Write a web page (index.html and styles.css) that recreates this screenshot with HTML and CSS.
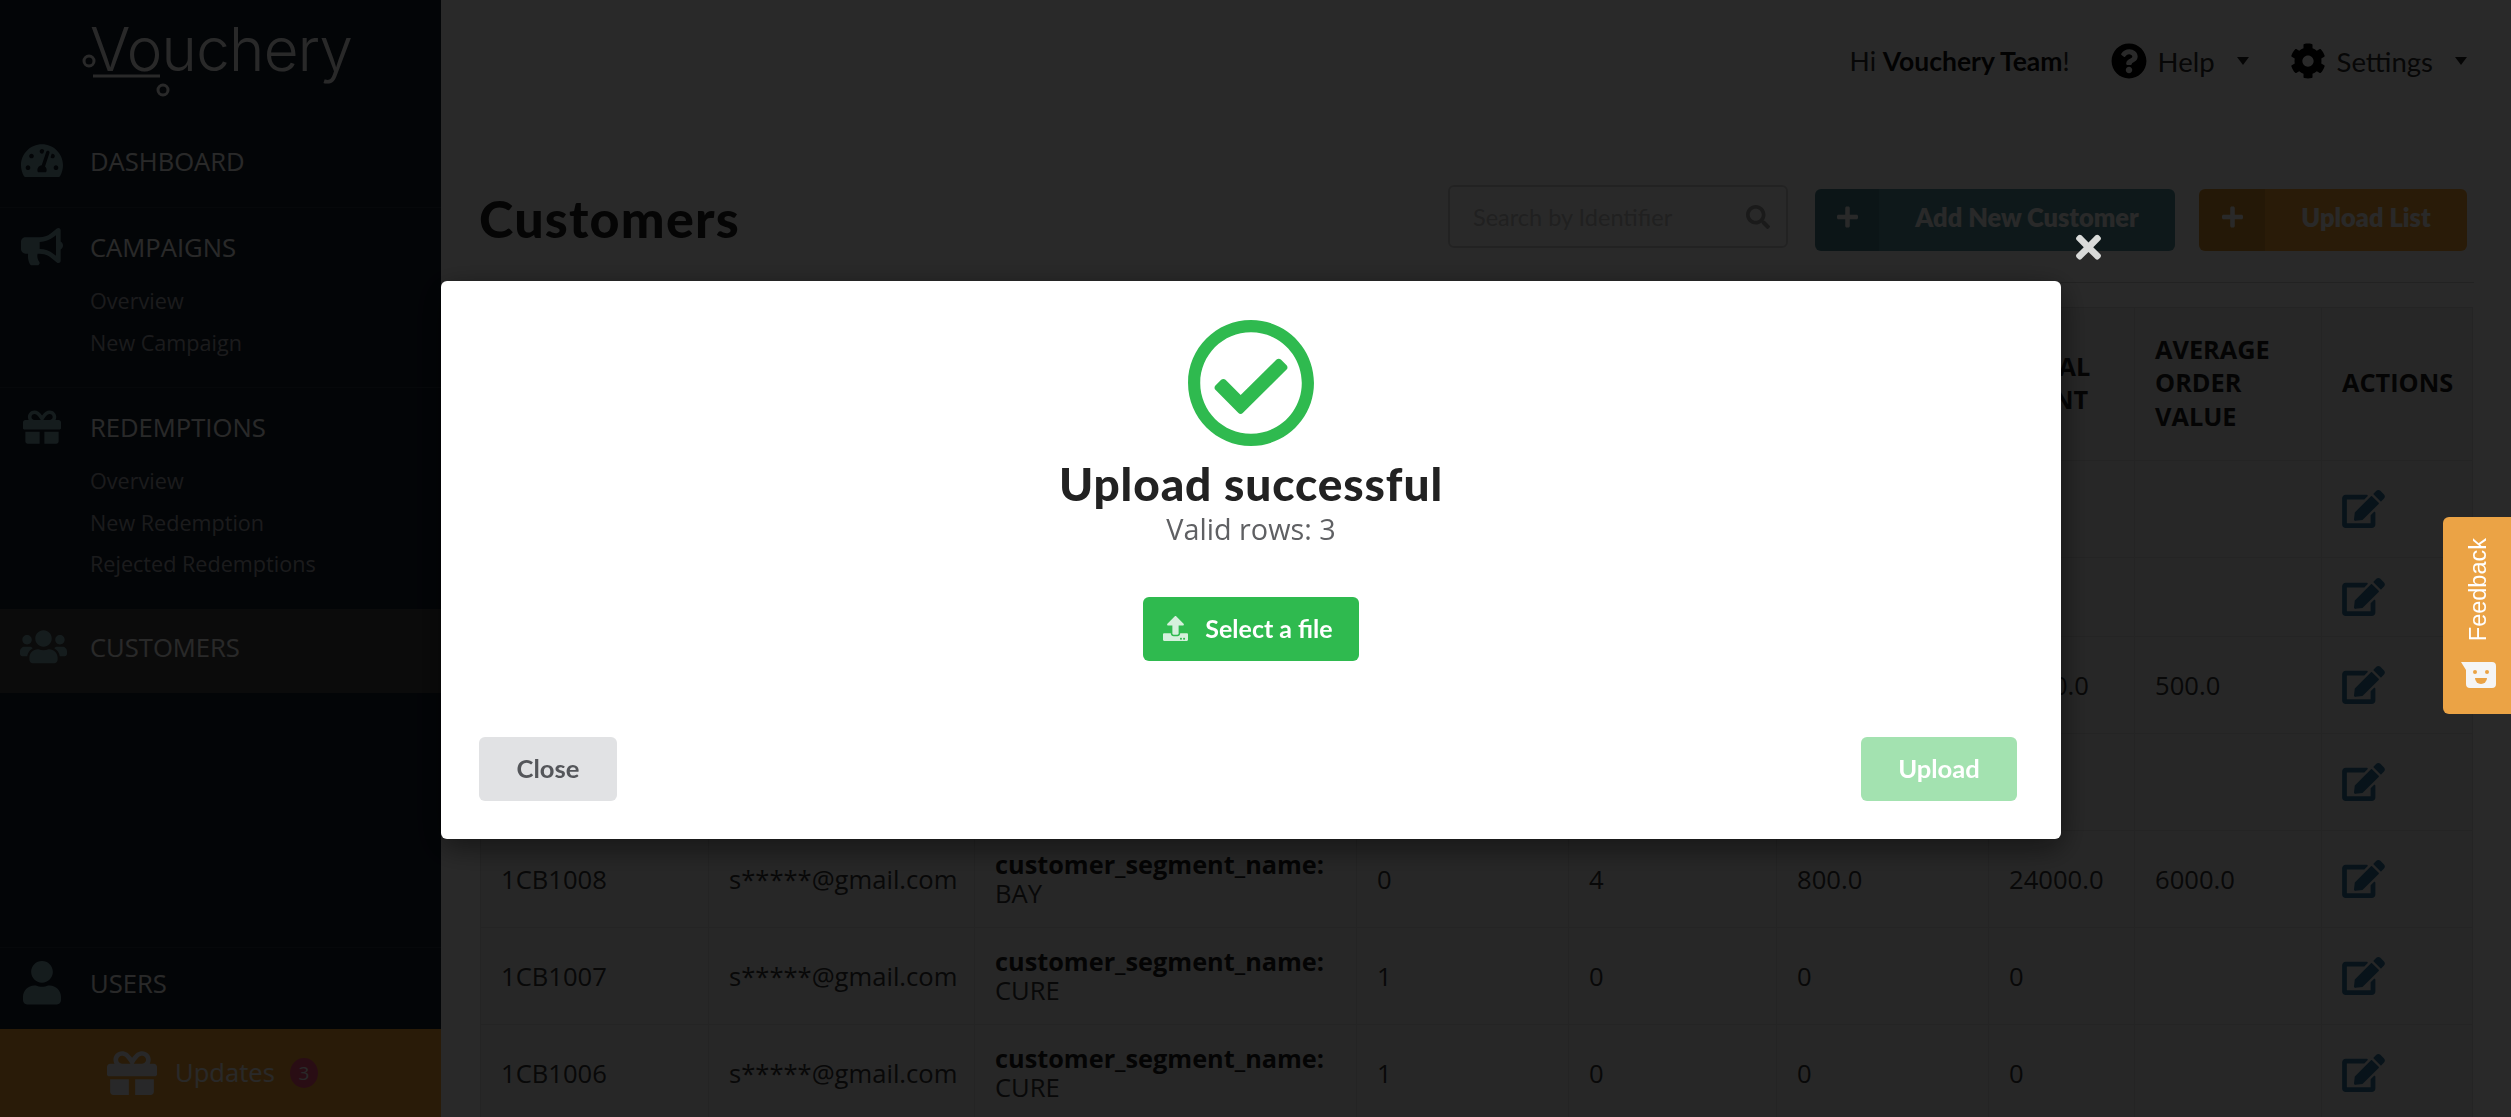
FILE: index.html
```html
<!DOCTYPE html>
<html lang="en">
<head>
    <meta charset="UTF-8">
    <meta name="viewport" content="width=device-width, initial-scale=1.0">
    <title>Customers</title>
    <link rel="stylesheet" href="styles.css">
</head>
<body>
    <div class="layout">
        <!-- Sidebar -->
        <aside class="sidebar">
            <div class="logo">
                <span class="logo-text">Vouchery</span>
                <svg class="logo-cart" viewBox="0 0 90 50"><circle cx="9" cy="11" r="5" fill="none" stroke="currentColor" stroke-width="3"/><path d="M13 26h67" stroke="currentColor" stroke-width="3"/><circle cx="83" cy="40" r="5" fill="none" stroke="currentColor" stroke-width="3"/></svg>
            </div>

            <div class="nav-section nav-dashboard">
                <a class="nav-title">
                    <span class="nav-icon"><svg width="42" viewBox="0 0 576 512"><path d="M288 32C128.94 32 0 160.94 0 320c0 52.800 14.250 102.260 39.060 144.800 5.610 9.620 16.300 15.200 27.440 15.200h443c11.140 0 21.830-5.580 27.440-15.200C561.750 422.260 576 372.800 576 320c0-159.060-128.940-288-288-288zm0 64c14.710 0 26.580 10.130 30.320 23.650-1.110 2.260-2.640 4.230-3.450 6.670l-9.220 27.670c-5.130 3.490-10.970 6.010-17.640 6.010-17.670 0-32-14.330-32-32S270.330 96 288 96zM96 384c-17.670 0-32-14.330-32-32s14.330-32 32-32 32 14.330 32 32-14.330 32-32 32zm48-160c-17.670 0-32-14.330-32-32s14.330-32 32-32 32 14.330 32 32-14.330 32-32 32zm246.770-72.410l-61.330 184C343.130 347.330 352 364.540 352 384c0 11.720-3.380 22.550-8.880 32H232.880c-5.500-9.450-8.880-20.280-8.880-32 0-33.940 26.500-61.430 59.900-63.590l61.340-184.010c4.170-12.560 17.730-19.450 30.360-15.170 12.570 4.190 19.350 17.770 15.170 30.360zm14.660 57.200l15.520-46.550c3.470-1.290 7.130-2.230 11.050-2.230 17.670 0 32 14.330 32 32s-14.330 32-32 32c-11.380-.01-20.890-6.280-26.570-15.220zM480 384c-17.670 0-32-14.330-32-32s14.330-32 32-32 32 14.330 32 32-14.330 32-32 32z"/></svg></span>
                    DASHBOARD
                </a>
            </div>

            <div class="nav-section">
                <a class="nav-title">
                    <span class="nav-icon"><svg width="42" viewBox="0 0 576 512"><path d="M576 240c0-23.630-12.950-44.040-32-55.120V32.010C544 23.260 537.020 0 512 0c-7.120 0-14.190 2.380-19.980 7.020l-85.030 68.030C364.280 109.190 310.660 128 256 128H64c-35.350 0-64 28.650-64 64v96c0 35.350 28.650 64 64 64h33.700c-1.390 10.480-2.180 21.140-2.180 32 0 39.770 9.260 77.350 25.560 110.940 5.190 10.690 16.520 17.060 28.400 17.060h74.280c26.050 0 41.690-29.840 25.900-50.560-16.400-21.520-26.150-48.360-26.150-77.440 0-11.110 1.620-21.790 4.410-32H256c54.660 0 108.280 18.810 150.980 52.950l85.030 68.030a32.023 32.023 0 0 0 19.980 7.020c24.920 0 32-22.780 32-32V295.130C563.050 284.040 576 263.630 576 240zm-96 141.420l-33.050-26.440C392.950 311.780 325.120 288 256 288v-96c69.120 0 136.950-23.780 190.950-66.980L480 98.580v282.840z"/></svg></span>
                    CAMPAIGNS
                </a>
                <a class="nav-sub">Overview</a>
                <a class="nav-sub">New Campaign</a>
            </div>

            <div class="nav-section nav-redemptions">
                <a class="nav-title">
                    <span class="nav-icon nav-icon-narrow"><svg width="38" viewBox="0 0 512 512"><path d="M32 448c0 17.700 14.300 32 32 32h160V320H32v128zm256 32h160c17.700 0 32-14.300 32-32V320H288v160zm192-320h-42.100c6.200-12.100 10.100-25.500 10.100-40 0-48.500-39.500-88-88-88-41.600 0-68.500 21.300-103 68.300-34.500-47-61.400-68.300-103-68.300-48.500 0-88 39.500-88 88 0 14.500 3.800 27.900 10.100 40H32c-17.700 0-32 14.300-32 32v80c0 8.800 7.200 16 16 16h480c8.800 0 16-7.200 16-16v-80c0-17.700-14.300-32-32-32zm-326.100 0c-22.100 0-40-17.900-40-40s17.900-40 40-40c19.900 0 34.600 3.300 86.100 80h-86.100zm206.100 0h-86.100c51.400-76.500 65.700-80 86.100-80 22.100 0 40 17.900 40 40s-17.900 40-40 40z"/></svg></span>
                    REDEMPTIONS
                </a>
                <a class="nav-sub">Overview</a>
                <a class="nav-sub">New Redemption</a>
                <a class="nav-sub">Rejected Redemptions</a>
            </div>

            <div class="nav-section nav-active">
                <a class="nav-title">
                    <span class="nav-icon nav-icon-wide"><svg width="47" viewBox="0 0 640 512"><path d="M96 224c35.300 0 64-28.700 64-64s-28.700-64-64-64-64 28.700-64 64 28.700 64 64 64zm448 0c35.300 0 64-28.700 64-64s-28.700-64-64-64-64 28.700-64 64 28.700 64 64 64zm32 32h-64c-17.600 0-33.500 7.100-45.100 18.600 40.300 22.100 68.900 62 75.100 109.400h66c17.700 0 32-14.300 32-32v-32c0-35.300-28.700-64-64-64zm-256 0c61.900 0 112-50.100 112-112S381.900 32 320 32 208 82.100 208 144s50.100 112 112 112zm76.800 32h-8.300c-20.800 10-43.900 16-68.500 16s-47.600-6-68.500-16h-8.300C179.600 288 128 339.600 128 403.200V432c0 26.500 21.500 48 48 48h288c26.500 0 48-21.500 48-48v-28.800c0-63.600-51.600-115.200-115.200-115.200zm-223.700-13.400C161.500 263.100 145.600 256 128 256H64c-35.300 0-64 28.700-64 64v32c0 17.700 14.300 32 32 32h65.900c6.300-47.400 34.900-87.300 75.200-109.400z"/></svg></span>
                    CUSTOMERS
                </a>
            </div>

            <div class="nav-section nav-users">
                <a class="nav-title">
                    <span class="nav-icon nav-icon-narrow"><svg width="38" viewBox="0 0 448 512"><path d="M224 256c70.700 0 128-57.300 128-128S294.700 0 224 0 96 57.300 96 128s57.300 128 128 128zm89.600 32h-16.700c-22.200 10.200-46.900 16-72.900 16s-50.600-5.800-72.900-16h-16.700C60.200 288 0 348.200 0 422.400V464c0 26.500 21.500 48 48 48h352c26.500 0 48-21.500 48-48v-41.600c0-74.200-60.200-134.400-134.400-134.400z"/></svg></span>
                    USERS
                </a>
            </div>

            <div class="updates">
                <svg width="50" viewBox="0 0 512 512"><path d="M32 448c0 17.700 14.300 32 32 32h160V320H32v128zm256 32h160c17.700 0 32-14.300 32-32V320H288v160zm192-320h-42.100c6.200-12.100 10.100-25.500 10.100-40 0-48.500-39.500-88-88-88-41.600 0-68.500 21.300-103 68.300-34.500-47-61.400-68.300-103-68.300-48.500 0-88 39.500-88 88 0 14.500 3.800 27.900 10.100 40H32c-17.700 0-32 14.300-32 32v80c0 8.800 7.200 16 16 16h480c8.800 0 16-7.200 16-16v-80c0-17.700-14.300-32-32-32zm-326.100 0c-22.100 0-40-17.900-40-40s17.900-40 40-40c19.900 0 34.600 3.300 86.100 80h-86.100zm206.100 0h-86.100c51.400-76.500 65.700-80 86.100-80 22.100 0 40 17.900 40 40s-17.900 40-40 40z"/></svg>
                <span class="updates-text">Updates</span>
                <span class="updates-badge">3</span>
            </div>
        </aside>

        <!-- Main content -->
        <main class="main">
            <div class="topbar">
                <span class="greeting">Hi <b>Vouchery Team</b>!</span>
                <span class="top-item help">
                    <svg width="36" viewBox="0 0 512 512"><path d="M504 256c0 136.997-111.043 248-248 248S8 392.997 8 256C8 119.083 119.043 8 256 8s248 111.083 248 248zM262.655 90c-54.497 0-89.255 22.957-116.549 63.758-3.536 5.286-2.353 12.415 2.715 16.258l34.699 26.310c5.205 3.947 12.621 3.008 16.665-2.122 17.864-22.658 30.113-35.797 57.303-35.797 20.429 0 45.698 13.148 45.698 32.958 0 14.976-12.363 22.667-32.534 33.976C247.128 238.528 216 254.941 216 296v4c0 6.627 5.373 12 12 12h56c6.627 0 12-5.373 12-12v-1.333c0-28.462 83.186-29.647 83.186-106.667 0-58.002-60.165-102-116.531-102zM256 338c-25.365 0-46 20.635-46 46 0 25.364 20.635 46 46 46s46-20.636 46-46c0-25.365-20.635-46-46-46z"/></svg>
                    Help
                    <i class="caret"></i>
                </span>
                <span class="top-item">
                    <svg width="36" viewBox="0 0 512 512"><path d="M487.4 315.700l-42.600-24.600c4.300-23.200 4.300-47 0-70.200l42.600-24.600c4.900-2.800 7.100-8.600 5.500-14-11.100-35.600-30-67.800-54.700-94.600-3.800-4.100-10-5.100-14.800-2.300L380.800 110c-17.900-15.400-38.500-27.300-60.800-35.100V25.800c0-5.600-3.900-10.500-9.400-11.700-36.700-8.200-74.300-7.800-109.200 0-5.500 1.200-9.400 6.100-9.400 11.700V75c-22.200 7.900-42.800 19.800-60.800 35.100L88.700 85.500c-4.900-2.800-11-1.900-14.800 2.300-24.700 26.700-43.600 58.900-54.700 94.600-1.700 5.400.600 11.200 5.500 14L67.300 221c-4.300 23.200-4.300 47 0 70.200l-42.600 24.600c-4.900 2.800-7.100 8.600-5.500 14 11.100 35.600 30 67.800 54.700 94.600 3.800 4.100 10 5.100 14.800 2.300l42.600-24.600c17.900 15.400 38.500 27.300 60.800 35.100v49.200c0 5.600 3.900 10.500 9.400 11.700 36.700 8.200 74.300 7.800 109.200 0 5.500-1.200 9.400-6.100 9.400-11.700v-49.200c22.200-7.900 42.800-19.800 60.800-35.100l42.600 24.600c4.900 2.800 11 1.900 14.800-2.300 24.700-26.700 43.600-58.900 54.700-94.600 1.500-5.500-.7-11.300-5.600-14.100zM256 336c-44.100 0-80-35.900-80-80s35.900-80 80-80 80 35.900 80 80-35.900 80-80 80z"/></svg>
                    Settings
                    <i class="caret"></i>
                </span>
            </div>

            <div class="page-head">
                <h1>Customers</h1>
                <div class="page-actions">
                    <div class="search">
                        <input type="text" placeholder="Search by Identifier">
                        <svg width="24" viewBox="0 0 512 512"><path d="M505 442.700L405.300 343c-4.500-4.500-10.600-7-17-7H372c27.600-35.300 44-79.700 44-128C416 93.100 322.900 0 208 0S0 93.100 0 208s93.100 208 208 208c48.300 0 92.700-16.400 128-44v16.300c0 6.400 2.500 12.500 7 17l99.700 99.700c9.400 9.400 24.600 9.400 33.900 0l28.300-28.300c9.400-9.400 9.400-24.600.1-34zM208 336c-70.700 0-128-57.200-128-128 0-70.700 57.200-128 128-128 70.700 0 128 57.200 128 128 0 70.700-57.200 128-128 128z"/></svg>
                    </div>
                    <a class="action-btn btn-add">
                        <span class="btn-icon"><svg width="21" viewBox="0 0 448 512"><path d="M416 208H272V64c0-17.670-14.330-32-32-32h-32c-17.670 0-32 14.330-32 32v144H32c-17.670 0-32 14.330-32 32v32c0 17.670 14.330 32 32 32h144v144c0 17.670 14.330 32 32 32h32c17.670 0 32-14.330 32-32V304h144c17.670 0 32-14.330 32-32v-32c0-17.670-14.330-32-32-32z"/></svg></span>
                        <span class="btn-label">Add New Customer</span>
                    </a>
                    <a class="action-btn btn-upload">
                        <span class="btn-icon"><svg width="21" viewBox="0 0 448 512"><path d="M416 208H272V64c0-17.670-14.330-32-32-32h-32c-17.670 0-32 14.330-32 32v144H32c-17.670 0-32 14.330-32 32v32c0 17.670 14.330 32 32 32h144v144c0 17.670 14.330 32 32 32h32c17.670 0 32-14.330 32-32V304h144c17.670 0 32-14.330 32-32v-32c0-17.670-14.330-32-32-32z"/></svg></span>
                        <span class="btn-label">Upload List</span>
                    </a>
                </div>
            </div>

            <table class="customers">
                <colgroup><col><col><col><col><col><col><col><col><col></colgroup>
                <thead>
                    <tr>
                        <th>IDENTIFIER</th><th>EMAIL</th><th>METADATA</th><th>VOUCHERS</th><th>REDEMPTIONS</th><th>TOTAL ORDERS</th><th>TOTAL SPENT</th><th>AVERAGE ORDER VALUE</th><th>ACTIONS</th>
                    </tr>
                </thead>
                <tbody>
                    <tr><td>1CB1012</td><td>s*****@gmail.com</td><td><b>customer_segment_name:</b><br>CURE</td><td>1</td><td>0</td><td>0</td><td>0</td><td></td><td class="cell-action"><svg class="edit" viewBox="0 0 576 512"><use href="#edit"/></svg></td></tr>
                    <tr class="row-short"><td>1CB1011</td><td>s*****@gmail.com</td><td></td><td>1</td><td>0</td><td>0</td><td>0</td><td></td><td class="cell-action"><svg class="edit" viewBox="0 0 576 512"><use href="#edit"/></svg></td></tr>
                    <tr><td>1CB1010</td><td>s*****@gmail.com</td><td><b>customer_segment_name:</b><br>BAY</td><td>0</td><td>2</td><td>500.0</td><td>1000.0</td><td>500.0</td><td class="cell-action"><svg class="edit" viewBox="0 0 576 512"><use href="#edit"/></svg></td></tr>
                    <tr><td>1CB1009</td><td>s*****@gmail.com</td><td><b>customer_segment_name:</b><br>CURE</td><td>1</td><td>0</td><td>0</td><td>0</td><td></td><td class="cell-action"><svg class="edit" viewBox="0 0 576 512"><use href="#edit"/></svg></td></tr>
                    <tr><td>1CB1008</td><td>s*****@gmail.com</td><td><b>customer_segment_name:</b><br>BAY</td><td>0</td><td>4</td><td>800.0</td><td>24000.0</td><td>6000.0</td><td class="cell-action"><svg class="edit" viewBox="0 0 576 512"><use href="#edit"/></svg></td></tr>
                    <tr><td>1CB1007</td><td>s*****@gmail.com</td><td><b>customer_segment_name:</b><br>CURE</td><td>1</td><td>0</td><td>0</td><td>0</td><td></td><td class="cell-action"><svg class="edit" viewBox="0 0 576 512"><use href="#edit"/></svg></td></tr>
                    <tr><td>1CB1006</td><td>s*****@gmail.com</td><td><b>customer_segment_name:</b><br>CURE</td><td>1</td><td>0</td><td>0</td><td>0</td><td></td><td class="cell-action"><svg class="edit" viewBox="0 0 576 512"><use href="#edit"/></svg></td></tr>
                </tbody>
            </table>
        </main>
    </div>

    <!-- shared edit icon -->
    <svg class="icon-defs"><defs><path id="edit" d="M402.600 83.200l90.200 90.200c3.800 3.800 3.800 10 0 13.800L274.400 405.600l-92.800 10.300c-12.400 1.400-22.900-9.100-21.500-21.500l10.300-92.800L388.800 83.200c3.800-3.800 10-3.800 13.800 0zm162-22.900l-48.800-48.800c-15.200-15.200-39.900-15.200-55.200 0l-35.400 35.400c-3.800 3.800-3.800 10 0 13.800l90.200 90.200c3.800 3.800 10 3.800 13.800 0l35.400-35.400c15.200-15.300 15.200-40 0-55.200zM384 346.200V448H64V128h229.800c3.200 0 6.200-1.300 8.500-3.500l40-40c7.600-7.600 2.200-20.500-8.500-20.500H48C21.500 64 0 85.500 0 112v352c0 26.500 21.500 48 48 48h352c26.500 0 48-21.500 48-48V306.200c0-10.700-12.900-16-20.500-8.500l-40 40c-2.200 2.300-3.500 5.300-3.500 8.500z"/></defs></svg>

    <!-- Upload modal -->
    <div class="overlay">
        <div class="modal">
            <button class="modal-x" type="button" aria-label="Close">
                <svg width="25" viewBox="0 0 352 512"><path d="M242.720 256l100.070-100.070c12.280-12.280 12.280-32.190 0-44.480l-22.240-22.240c-12.280-12.280-32.190-12.280-44.480 0L176 189.280 75.930 89.210c-12.280-12.280-32.190-12.280-44.480 0L9.210 111.450c-12.280 12.280-12.280 32.190 0 44.480L109.280 256 9.210 356.070c-12.280 12.280-12.280 32.190 0 44.480l22.240 22.240c12.280 12.280 32.200 12.280 44.480 0L176 322.720l100.070 100.070c12.280 12.280 32.200 12.280 44.480 0l22.240-22.240c12.280-12.280 12.280-32.190 0-44.480L242.720 256z"/></svg>
            </button>
            <div class="modal-body">
                <svg class="success-icon" viewBox="0 0 512 512"><path d="M256 8C119.033 8 8 119.033 8 256s111.033 248 248 248 248-111.033 248-248S392.967 8 256 8zm0 48c110.532 0 200 89.451 200 200 0 110.532-89.451 200-200 200-110.532 0-200-89.451-200-200 0-110.532 89.451-200 200-200m140.204 130.267l-22.536-22.718c-4.667-4.705-12.265-4.736-16.970-.068L215.346 303.697l-59.792-60.277c-4.667-4.705-12.265-4.736-16.970-.069l-22.719 22.536c-4.705 4.667-4.736 12.265-.068 16.971l90.781 91.516c4.667 4.705 12.265 4.736 16.970.068l172.589-171.204c4.704-4.668 4.734-12.266.067-16.971z"/></svg>
                <h2>Upload successful</h2>
                <p>Valid rows: 3</p>
                <button class="select-file" type="button">
                    <svg width="25" viewBox="0 0 512 512"><path d="M296 384h-80c-13.300 0-24-10.700-24-24V192h-87.700c-17.800 0-26.700-21.500-14.100-34.100L242.300 5.700c7.500-7.500 19.800-7.500 27.300 0l152.200 152.200c12.600 12.600 3.700 34.100-14.100 34.100H320v168c0 13.300-10.700 24-24 24zm216-8v112c0 13.300-10.700 24-24 24H24c-13.300 0-24-10.700-24-24V376c0-13.300 10.700-24 24-24h136v8c0 30.900 25.100 56 56 56h80c30.900 0 56-25.100 56-56v-8h136c13.300 0 24 10.700 24 24zm-124 88c0-11-9-20-20-20s-20 9-20 20 9 20 20 20 20-9 20-20zm64 0c0-11-9-20-20-20s-20 9-20 20 9 20 20 20 20-9 20-20z"/></svg>
                    Select a file
                </button>
            </div>
            <div class="modal-footer">
                <button class="btn-close" type="button">Close</button>
                <button class="btn-send" type="button">Upload</button>
            </div>
        </div>
    </div>

    <!-- Feedback tab -->
    <div class="feedback">
        <span class="feedback-text">Feedback</span>
        <svg class="feedback-icon" viewBox="0 0 35 26"><path d="M0 0h31a4 4 0 0 1 4 4v18a4 4 0 0 1-4 4H9a4 4 0 0 1-4-4V8z" fill="#f5f5f5"/><circle cx="14" cy="10" r="2" fill="#eba345"/><circle cx="26" cy="10" r="2" fill="#eba345"/><path d="M14 16h12a6 6 0 0 1-12 0z" fill="#eba345"/></svg>
    </div>
</body>
</html>
```

FILE: styles.css
```css
* {
    box-sizing: border-box;
}
html, body {
    height: 100%;
}
body {
    margin: 0;
    overflow: hidden;
    background: #fff;
    color: #333;
    font-family: "Open Sans", sans-serif;
    font-size: 25.6px;
}
.layout {
    display: flex;
    height: 1117px;
}

/* Sidebar */
.sidebar {
    width: 441px;
    flex-shrink: 0;
    display: flex;
    flex-direction: column;
    background: #131f2c;
    color: #fff;
}
.logo {
    position: relative;
    height: 114px;
    padding: 13px 0 0 90px;
}
.logo-text {
    font-family: Inter, sans-serif;
    font-weight: 300;
    font-size: 60px;
    line-height: 72px;
    letter-spacing: -0.7px;
}
.logo-cart {
    position: absolute;
    left: 80px;
    top: 50px;
    width: 90px;
    height: 50px;
    color: #fff;
    overflow: visible;
}
.nav-section {
    padding: 7px 0 24px;
    border-bottom: 1px solid #2a3642;
}
.nav-dashboard {
    padding: 15px 0 14px;
}
.nav-redemptions {
    border-bottom: none;
    padding-bottom: 24.5px;
}
.nav-active {
    height: 84px;
    padding: 6px 0 14px;
    background: #454545;
    border-bottom: none;
    margin-bottom: auto;
}
.nav-users {
    height: 82px;
    padding: 3px 0 0;
    border-top: 1px solid #2a3642;
    border-bottom: none;
}
.nav-title {
    display: flex;
    align-items: center;
    height: 64px;
}
.nav-title + .nav-sub {
    margin-top: 1px;
}
.nav-icon {
    width: 90px;
    padding-left: 21px;
    display: flex;
    align-items: center;
    fill: #84adb5;
}
.nav-icon-narrow {
    padding-left: 23px;
}
.nav-icon-wide {
    padding-left: 20px;
}
.nav-icon svg {
    display: block;
}
.nav-sub {
    display: flex;
    align-items: center;
    height: 41.5px;
    padding-left: 90px;
    font-size: 21.6px;
    color: #a8a8b0;
}
.updates {
    height: 88px;
    background: #faa932;
    display: flex;
    align-items: center;
    padding-left: 107px;
    fill: #f5f5fa;
    color: #fff;
}
.updates-text {
    margin-left: 18px;
    padding-bottom: 2px;
}
.updates-badge {
    margin-left: 15px;
    width: 28px;
    height: 30px;
    border-radius: 50%;
    background: #ff517d;
    font-size: 19px;
    display: flex;
    align-items: center;
    justify-content: center;
}

/* Main */
.main {
    flex: 1;
    min-width: 0;
    padding: 0 37px 0 39px;
}
.topbar {
    height: 124px;
    padding: 0 7px 2px 0;
    display: flex;
    align-items: center;
    justify-content: flex-end;
    font-family: Lato, sans-serif;
    font-size: 27.5px;
    color: #2b2b2b;
}
.greeting {
    font-size: 26.5px;
}
.greeting b {
    color: #111;
}
.top-item {
    display: flex;
    align-items: center;
    gap: 11px;
    margin-left: 41px;
    fill: #000;
}
.caret {
    margin-left: 11px;
    border-left: 6px solid transparent;
    border-right: 6px solid transparent;
    border-top: 8px solid #222;
}
.page-head {
    height: 159px;
    display: flex;
    justify-content: space-between;
    padding: 61px 7px 0 0;
    border-bottom: 1px solid #d2d2d2;
}
.page-head h1 {
    margin: 3px 0 0 -1px;
    font-family: Lato, sans-serif;
    font-weight: 900;
    font-size: 52px;
    letter-spacing: 1.2px;
    line-height: 60px;
    color: #1f1f1f;
}
.page-actions {
    display: flex;
    align-items: flex-start;
    gap: 24px;
}
.search {
    width: 340px;
    height: 63px;
    margin-right: 3px;
    display: flex;
    align-items: center;
    padding: 0 16px 0 23px;
    border: 2px solid #d5d5d5;
    border-radius: 6px;
    fill: #a0a0a0;
}
.search input {
    flex: 1;
    min-width: 0;
    border: none;
    outline: none;
    background: none;
    font-family: Lato, sans-serif;
    font-size: 23.5px;
    padding: 0;
}
.search input::placeholder {
    color: #c4c4c4;
}
.action-btn {
    height: 62px;
    margin-top: 4px;
    display: flex;
    border-radius: 6px;
    overflow: hidden;
    color: #fff;
    fill: #fff;
    font-family: Lato, sans-serif;
    font-weight: 800;
    font-size: 25.4px;
}
.btn-add {
    width: 360px;
    background: #5796a2;
}
.btn-upload {
    width: 268px;
    background: #faa932;
}
.btn-icon {
    width: 64px;
    padding-bottom: 6px;
    display: flex;
    align-items: center;
    justify-content: center;
    background: rgba(0, 0, 0, 0.1);
}
.btn-upload .btn-icon {
    width: 66px;
}
.btn-label {
    flex: 1;
    padding-bottom: 6px;
    display: flex;
    align-items: center;
    justify-content: center;
}

/* Table */
.customers {
    width: 1992px;
    margin: 24px 0 0;
    border-collapse: collapse;
    table-layout: fixed;
    background: #f0f0f0;
    line-height: 29px;
}
.customers col:nth-child(1) { width: 228px; }
.customers col:nth-child(2) { width: 266px; }
.customers col:nth-child(3) { width: 382px; }
.customers col:nth-child(4) { width: 212px; }
.customers col:nth-child(5) { width: 208px; }
.customers col:nth-child(6) { width: 212px; }
.customers col:nth-child(7) { width: 146px; }
.customers col:nth-child(8) { width: 187px; }
.customers col:nth-child(9) { width: 151px; }
.customers th, .customers td {
    border: 1px solid #dcdcdc;
    padding: 0 20px;
    text-align: left;
    vertical-align: middle;
}
.customers th {
    height: 153px;
    padding-bottom: 2px;
    line-height: 33.5px;
    font-size: 25.3px;
    color: #1a1a1a;
}
.customers td {
    height: 97px;
}
.customers b {
    font-size: 25.3px;
    color: #1a1a1a;
}
.customers .row-short td {
    height: 79px;
}
.edit {
    display: block;
    width: 43px;
    height: 38px;
    fill: #33789f;
}
.icon-defs {
    position: absolute;
    width: 0;
    height: 0;
}

/* Modal */
.overlay {
    position: fixed;
    inset: 0;
    z-index: 10;
    display: flex;
    justify-content: center;
    align-items: flex-start;
    padding: 281px 9px 0 0;
    background: rgba(0, 0, 0, 0.84);
}
.modal {
    position: relative;
    width: 1620px;
    height: 558px;
    display: flex;
    flex-direction: column;
    justify-content: space-between;
    background: #fff;
    border-radius: 6px;
    box-shadow: 0 8px 30px rgba(0, 0, 0, 0.5);
}
.modal-x {
    position: absolute;
    top: -52px;
    right: -40px;
    padding: 0;
    border: none;
    background: none;
    fill: #d9dad9;
}
.modal-x svg {
    display: block;
}
.modal-body {
    padding-top: 37px;
    display: flex;
    flex-direction: column;
    align-items: center;
}
.success-icon {
    width: 130px;
    height: 130px;
    fill: #2fba4f;
}
.modal-body h2 {
    margin: 10px 0 0;
    font-family: Lato, sans-serif;
    font-weight: 900;
    font-size: 46px;
    letter-spacing: 0.9px;
    line-height: 52px;
    color: #222;
}
.modal-body p {
    margin: -1px 0 0;
    font-size: 28.8px;
    line-height: 40px;
    color: #5f6063;
}
.select-file {
    margin-top: 48px;
    width: 216px;
    height: 64px;
    padding: 0 6px 2px 0;
    display: flex;
    align-items: center;
    justify-content: center;
    gap: 17px;
    border: none;
    border-radius: 6px;
    background: #2fba4f;
    color: #fff;
    fill: #d5f0dc;
    font-family: Lato, sans-serif;
    font-weight: 700;
    font-size: 25px;
}
.modal-footer {
    display: flex;
    justify-content: space-between;
    padding: 0 44px 38px 38px;
}
.modal-footer button {
    height: 64px;
    padding-bottom: 3px;
    border: none;
    border-radius: 6px;
    font-family: Lato, sans-serif;
    font-weight: 700;
    font-size: 25.6px;
}
.btn-close {
    width: 138px;
    background: #e1e2e4;
    color: #54565a;
}
.btn-send {
    width: 156px;
    background: #a3e2b0;
    color: #fff;
}

/* Feedback tab */
.feedback {
    position: fixed;
    right: 0;
    top: 517px;
    z-index: 20;
    width: 68px;
    height: 197px;
    display: flex;
    flex-direction: column;
    align-items: center;
    justify-content: flex-end;
    padding: 0 0 26px 2px;
    background: #eba345;
    border-radius: 6px 0 0 6px;
}
.feedback-text {
    writing-mode: vertical-rl;
    transform: rotate(180deg);
    font-family: "Liberation Sans", sans-serif;
    font-size: 23.5px;
    line-height: 28px;
    color: #fff;
    margin-bottom: 21px;
}
.feedback-icon {
    width: 35px;
    height: 26px;
}
```
